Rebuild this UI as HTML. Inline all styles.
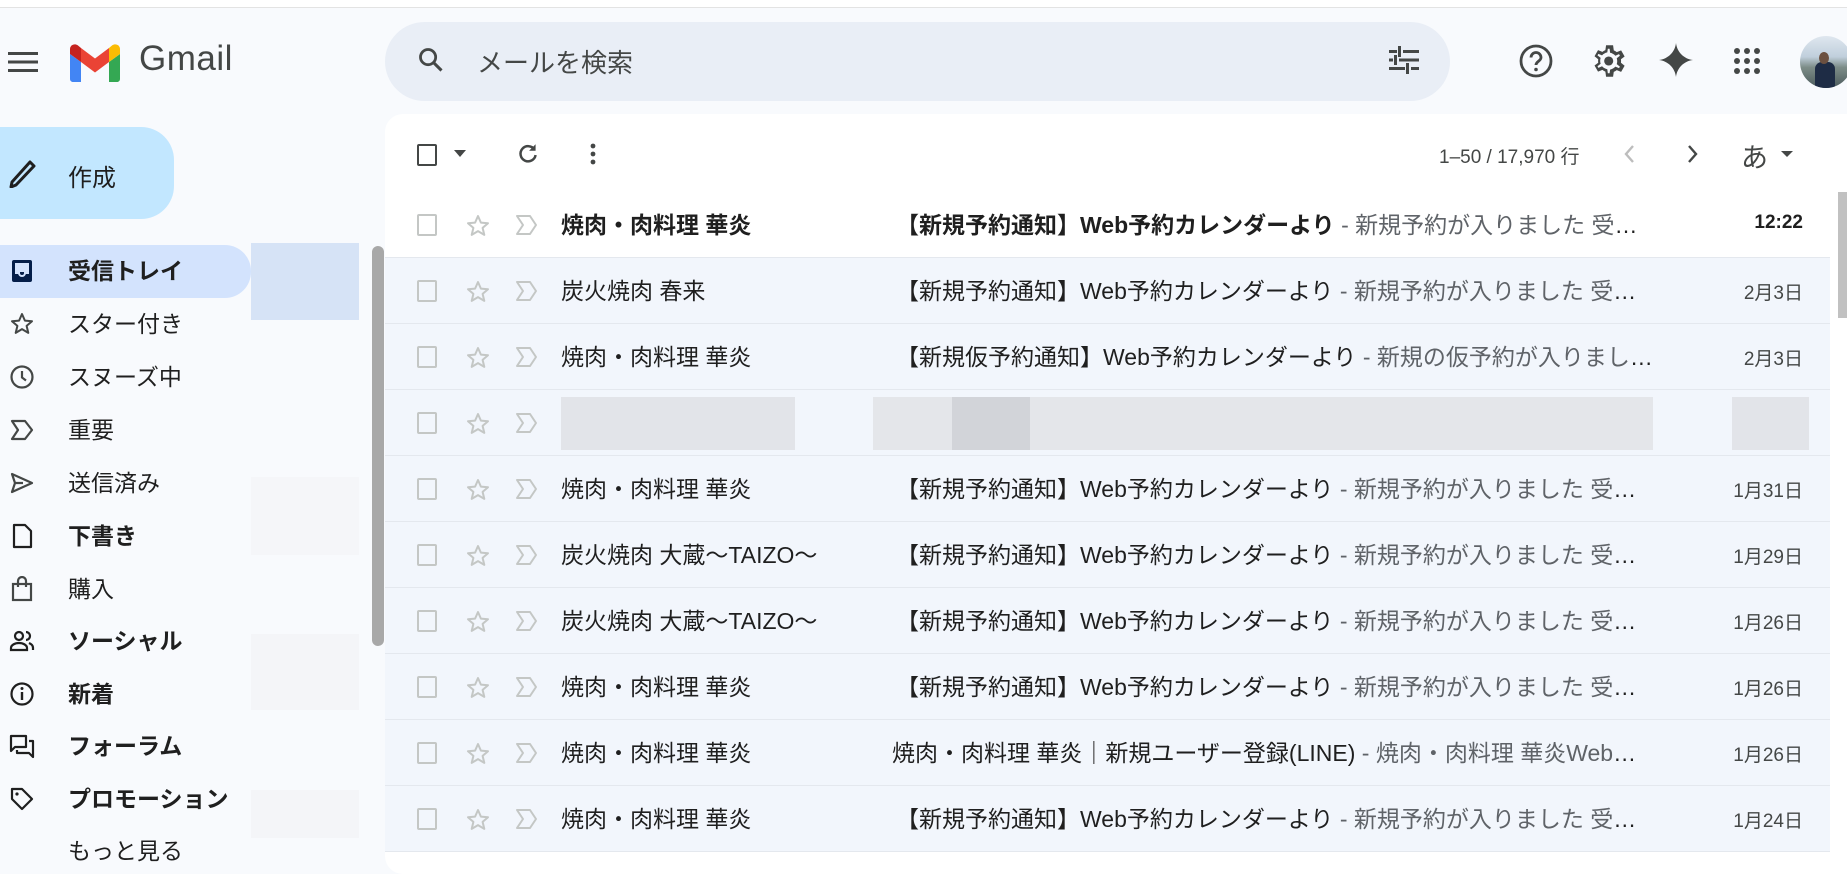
<!DOCTYPE html>
<html><head><meta charset="utf-8"><style>
*{box-sizing:border-box;margin:0;padding:0}
body{width:1847px;height:851px;overflow:hidden;background:#f8fafd;font-family:"Liberation Sans","Noto Sans CJK JP",sans-serif;color:#1f1f1f;position:relative}
.abs{position:absolute}
.topband{left:0;top:0;width:1847px;height:8px;background:#fff;border-bottom:1px solid #e3e3e3}
.search{left:385px;top:22px;width:1065px;height:79px;border-radius:40px;background:#e9eef6}
.ph{left:477px;top:43px;font-size:26px;color:#444746}
.compose{left:0;top:127px;width:174px;height:92px;border-radius:0 33px 33px 0;background:#c2e7ff}
.nav{left:68px;font-size:23px;color:#1f1f1f;line-height:26px}
.nav.b{font-weight:bold}
.navi{left:9px;width:26px;height:26px}
.panel{left:385px;top:114px;width:1480px;height:760px;background:#fff;border-radius:18px}
.row{left:385px;width:1445px;height:66px;background:#f2f6fc;border-bottom:1px solid #e4e8ee}
.row.w{background:#fff}
.cb{position:absolute;left:32px;top:22px;width:20px;height:22px;border:2px solid #c4c7c5;border-radius:2px}
.row svg.st{position:absolute;left:80px;top:21px}
.row svg.im{position:absolute;left:130px;top:22px}
.snd{position:absolute;left:176px;top:18px;font-size:23px;line-height:30px;white-space:nowrap}
.sub{position:absolute;left:511px;top:18px;width:760px;font-size:23px;line-height:30px;white-space:nowrap;overflow:hidden;text-overflow:ellipsis}
.sub span{color:#5f6368}
.dt{position:absolute;right:27px;top:20px;font-size:19px;color:#444746}
.b{font-weight:bold}
.blur{position:absolute;top:7px;height:53px;background:#e2e4e9}
</style></head><body>
<div class="abs topband"></div>
<svg class="abs" style="left:8px;top:50px" width="30" height="24" viewBox="0 0 30 24"><rect x="0" y="2" width="30" height="3" fill="#444746"/><rect x="0" y="10.5" width="30" height="3" fill="#444746"/><rect x="0" y="19" width="30" height="3" fill="#444746"/></svg>
<svg class="abs" style="left:70px;top:44px" width="50" height="38" viewBox="0 0 50 38">
<path d="M3 38h8V18L0 10v25c0 1.7 1.3 3 3 3z" fill="#4285f4"/>
<path d="M39 38h8c1.7 0 3-1.3 3-3V10l-11 8z" fill="#34a853"/>
<path d="M39 4v14l11-8V5c0-4-4.5-6-7.7-3.7z" fill="#fbbc04"/>
<path d="M11 18V4l14 10.5L39 4v14L25 28.5z" fill="#ea4335"/>
<path d="M0 5v5l11 8V4L7.7 1.3C4.5-1 0 1 0 5z" fill="#c5221f"/>
</svg>
<div class="abs" style="left:139px;top:39px;font-size:35px;color:#444746;letter-spacing:0.5px">Gmail</div>
<div class="abs search"></div>
<svg class="abs" style="left:417px;top:46px" width="28" height="28" viewBox="0 0 24 24"><circle cx="9.5" cy="9.5" r="6.5" stroke="#444746" stroke-width="2.4" fill="none"/><path d="M14.5 14.5L21 21" stroke="#444746" stroke-width="2.6"/></svg>
<div class="abs ph">メールを検索</div>
<svg class="abs" style="left:1389px;top:46px" width="30" height="28" viewBox="0 0 30 28"><g fill="#444746"><rect x="0" y="4" width="8" height="3"/><rect x="14" y="4" width="16" height="3"/><rect x="9" y="0" width="3" height="11"/><rect x="0" y="12.5" width="4" height="3"/><rect x="10" y="12.5" width="20" height="3"/><rect x="5" y="9" width="3" height="10"/><rect x="0" y="21" width="16" height="3"/><rect x="22" y="21" width="8" height="3"/><rect x="17" y="17" width="3" height="11"/></g></svg>
<svg class="abs" style="left:1519px;top:44px" width="34" height="34" viewBox="0 0 34 34"><circle cx="17" cy="17" r="15" stroke="#444746" stroke-width="2.8" fill="none"/><path d="M12 13.5a5 5 0 0 1 10 0c0 3.5-5 4-5 7.5" stroke="#444746" stroke-width="2.8" fill="none"/><circle cx="17" cy="25.5" r="1.8" fill="#444746"/></svg>
<svg class="abs" style="left:1587px;top:40px" width="42" height="42" viewBox="0 0 24 24"><path fill="#444746" d="M19.4 13a7.5 7.5 0 0 0 0-2l2.1-1.6-2-3.5-2.5 1a7.6 7.6 0 0 0-1.7-1L14.9 3h-4l-.4 2.8a7.6 7.6 0 0 0-1.7 1l-2.5-1-2 3.5L6.4 11a7.5 7.5 0 0 0 0 2l-2.1 1.6 2 3.5 2.5-1a7.6 7.6 0 0 0 1.7 1l.4 2.9h4l.4-2.8a7.6 7.6 0 0 0 1.7-1l2.5 1 2-3.5zM12.9 19h-1l-.3-2.3a5.6 5.6 0 0 1-3-1.7l-2.1.9-.5-.9 1.8-1.4a5.6 5.6 0 0 1 0-3.4L6 8.8l.5-.9 2.1.9a5.6 5.6 0 0 1 3-1.7L11.9 5h1l.3 2.3a5.6 5.6 0 0 1 3 1.7l2.1-.9.5.9-1.8 1.4a5.6 5.6 0 0 1 0 3.4l1.8 1.4-.5.9-2.1-.9a5.6 5.6 0 0 1-3 1.7z"/><circle cx="12.4" cy="12" r="2.6" fill="#444746"/></svg>
<svg class="abs" style="left:1659px;top:43px" width="34" height="34" viewBox="0 0 34 34"><path d="M17 0C18 9 25 16 34 17 25 18 18 25 17 34 16 25 9 18 0 17 9 16 16 9 17 0z" fill="#444746"/></svg>
<svg class="abs" style="left:1733px;top:47px" width="28" height="28" viewBox="0 0 28 28"><g fill="#444746"><circle cx="4" cy="4" r="3"/><circle cx="14" cy="4" r="3"/><circle cx="24" cy="4" r="3"/><circle cx="4" cy="14" r="3"/><circle cx="14" cy="14" r="3"/><circle cx="24" cy="14" r="3"/><circle cx="4" cy="24" r="3"/><circle cx="14" cy="24" r="3"/><circle cx="24" cy="24" r="3"/></g></svg>
<div class="abs" style="left:1800px;top:36px;width:52px;height:52px;border-radius:50%;overflow:hidden;background:linear-gradient(#dfe7ef 0%,#c0cfdc 40%,#7d8d88 60%,#4b5a5c 100%)"><div style="position:absolute;left:15px;top:26px;width:20px;height:28px;background:#1e2c45;border-radius:7px 7px 0 0"></div><div style="position:absolute;left:19px;top:16px;width:10px;height:12px;background:#6b5040;border-radius:50%"></div></div>
<div class="abs compose"></div>
<svg class="abs" style="left:8px;top:158px" width="28" height="30" viewBox="0 0 28 30"><path d="M4 24L22 4l4 4-18 19-5 2z" stroke="#1f1f1f" stroke-width="3" fill="none" stroke-linejoin="round"/></svg>
<div class="abs" style="left:68px;top:158px;font-size:24px">作成</div>
<div class="abs" style="left:0;top:245px;width:251px;height:53px;background:#d3e3fd;border-radius:0 26px 26px 0"></div>
<div class="abs" style="left:251px;top:243px;width:108px;height:77px;background:#d6e3f6"></div>
<div class="abs" style="left:251px;top:477px;width:108px;height:78px;background:#f5f6f9"></div>
<div class="abs" style="left:251px;top:634px;width:108px;height:76px;background:#f4f5f8"></div>
<div class="abs" style="left:251px;top:790px;width:108px;height:48px;background:#f4f5f8"></div>
<svg class="abs navi" style="top:258px" viewBox="0 0 26 26"><rect x="3" y="2" width="20" height="22" rx="2" fill="#041e49"/><path d="M6 15h4a3 3 0 0 0 6 0h4" stroke="#d3e3fd" stroke-width="2" fill="none"/><rect x="6" y="5" width="14" height="9" fill="#d3e3fd"/></svg>
<div class="abs nav b" style="top:258px">受信トレイ</div>
<svg class="abs navi" style="top:311px" viewBox="0 0 26 26"><path d="M13 3l2.9 6.6 7.1.6-5.4 4.7 1.7 7-6.3-3.8-6.3 3.8 1.7-7L3 10.2l7.1-.6z" stroke="#444746" stroke-width="2" fill="none" stroke-linejoin="round"/></svg>
<div class="abs nav" style="top:311px">スター付き</div>
<svg class="abs navi" style="top:364px" viewBox="0 0 26 26"><circle cx="13" cy="13" r="10.5" stroke="#444746" stroke-width="2.2" fill="none"/><path d="M13 7v6.5l4 3" stroke="#444746" stroke-width="2.2" fill="none"/></svg>
<div class="abs nav" style="top:364px">スヌーズ中</div>
<svg class="abs navi" style="top:417px" viewBox="0 0 26 26"><path d="M3 4h13l7 9-7 9H3l6-9z" stroke="#444746" stroke-width="2.2" fill="none" stroke-linejoin="round"/></svg>
<div class="abs nav" style="top:417px">重要</div>
<svg class="abs navi" style="top:470px" viewBox="0 0 26 26"><path d="M3 4l20 9-20 9 3-9zM6 13h8" stroke="#444746" stroke-width="2.2" fill="none" stroke-linejoin="round"/></svg>
<div class="abs nav" style="top:470px">送信済み</div>
<svg class="abs navi" style="top:523px" viewBox="0 0 26 26"><path d="M5 2h11l6 6v16H5z" stroke="#1f1f1f" stroke-width="2.2" fill="none" stroke-linejoin="round"/></svg>
<div class="abs nav b" style="top:523px">下書き</div>
<svg class="abs navi" style="top:576px" viewBox="0 0 26 26"><rect x="4" y="8" width="18" height="16" stroke="#444746" stroke-width="2.2" fill="none"/><path d="M9 11V5a4 4 0 0 1 8 0v6" stroke="#444746" stroke-width="2.2" fill="none"/></svg>
<div class="abs nav" style="top:576px">購入</div>
<svg class="abs navi" style="top:628px" viewBox="0 0 26 26"><circle cx="10" cy="8" r="4" stroke="#1f1f1f" stroke-width="2.2" fill="none"/><path d="M2 22v-2c0-3 4-5 8-5s8 2 8 5v2zM17 4a4 4 0 0 1 0 8M20 15c2 1 4 2 4 5v2" stroke="#1f1f1f" stroke-width="2.2" fill="none"/></svg>
<div class="abs nav b" style="top:628px">ソーシャル</div>
<svg class="abs navi" style="top:681px" viewBox="0 0 26 26"><circle cx="13" cy="13" r="10.5" stroke="#1f1f1f" stroke-width="2.2" fill="none"/><path d="M13 11v8" stroke="#1f1f1f" stroke-width="2.4"/><circle cx="13" cy="7.5" r="1.5" fill="#1f1f1f"/></svg>
<div class="abs nav b" style="top:681px">新着</div>
<svg class="abs navi" style="top:733px" viewBox="0 0 26 26"><path d="M2 3h15v11H6l-4 4zM20 8h4v16l-4-4H8v-3" stroke="#1f1f1f" stroke-width="2.2" fill="none" stroke-linejoin="round"/></svg>
<div class="abs nav b" style="top:733px">フォーラム</div>
<svg class="abs navi" style="top:786px" viewBox="0 0 26 26"><path d="M3 3h10l10 10-10 10L3 13z" stroke="#1f1f1f" stroke-width="2.2" fill="none" stroke-linejoin="round"/><circle cx="8" cy="8" r="1.6" fill="#1f1f1f"/></svg>
<div class="abs nav b" style="top:786px">プロモーション</div>
<div class="abs nav" style="top:838px">もっと見る</div>
<div class="abs" style="left:372px;top:246px;width:12px;height:400px;border-radius:6px;background:#a8a8a8"></div>
<div class="abs panel"></div>
<div class="abs" style="left:417px;top:144px;width:20px;height:22px;border:2.5px solid #444746;border-radius:2px"></div>
<svg class="abs" style="left:454px;top:150px" width="12" height="8"><path d="M0 0h12L6 7z" fill="#444746"/></svg>
<svg class="abs" style="left:515px;top:141px" width="26" height="26" viewBox="0 0 24 24"><path d="M18 8a7 7 0 1 0 1 5" stroke="#444746" stroke-width="2.3" fill="none"/><path d="M19 3v6h-6z" fill="#444746"/></svg>
<svg class="abs" style="left:589px;top:142px" width="8" height="24"><circle cx="4" cy="4" r="2.4" fill="#444746"/><circle cx="4" cy="12" r="2.4" fill="#444746"/><circle cx="4" cy="20" r="2.4" fill="#444746"/></svg>
<div class="abs" style="left:1439px;top:142px;font-size:19px;color:#444746">1–50 / 17,970 行</div>
<svg class="abs" style="left:1623px;top:144px" width="12" height="20"><path d="M10 2L3 10l7 8" stroke="#bdbdbd" stroke-width="2.4" fill="none"/></svg>
<svg class="abs" style="left:1687px;top:144px" width="12" height="20"><path d="M2 2l7 8-7 8" stroke="#444746" stroke-width="2.4" fill="none"/></svg>
<div class="abs" style="left:1741px;top:136px;font-size:27px;color:#444746">あ</div>
<svg class="abs" style="left:1781px;top:151px" width="12" height="7"><path d="M0 0h12L6 6z" fill="#444746"/></svg>
<div class="abs" style="left:1838px;top:192px;width:9px;height:126px;background:#c1c1c1"></div>
<div class="abs row w" style="top:192px"><div class="cb"></div><svg class="st" width="26" height="26" viewBox="0 0 26 26"><path d="M13 3l2.9 6.6 7.1.6-5.4 4.7 1.7 7-6.3-3.8-6.3 3.8 1.7-7L3 10.2l7.1-.6z" stroke="#c4c7c5" stroke-width="2" fill="none" stroke-linejoin="round"/></svg><svg class="im" width="24" height="22" viewBox="0 0 24 22"><path d="M2 2h13l6 9-6 9H2l6-9z" stroke="#c4c7c5" stroke-width="2" fill="none" stroke-linejoin="round"/></svg><div class="snd b">焼肉・肉料理 華炎</div><div class="sub"><b>【新規予約通知】Web予約カレンダーより</b> <span>- 新規予約が入りました 受付日時：2024年</span></div><div class="dt b" style="color:#1f1f1f">12:22</div></div>
<div class="abs row" style="top:258px"><div class="cb"></div><svg class="st" width="26" height="26" viewBox="0 0 26 26"><path d="M13 3l2.9 6.6 7.1.6-5.4 4.7 1.7 7-6.3-3.8-6.3 3.8 1.7-7L3 10.2l7.1-.6z" stroke="#c4c7c5" stroke-width="2" fill="none" stroke-linejoin="round"/></svg><svg class="im" width="24" height="22" viewBox="0 0 24 22"><path d="M2 2h13l6 9-6 9H2l6-9z" stroke="#c4c7c5" stroke-width="2" fill="none" stroke-linejoin="round"/></svg><div class="snd">炭火焼肉 春来</div><div class="sub">【新規予約通知】Web予約カレンダーより <span>- 新規予約が入りました 受付日時：2024年</span></div><div class="dt">2月3日</div></div>
<div class="abs row" style="top:324px"><div class="cb"></div><svg class="st" width="26" height="26" viewBox="0 0 26 26"><path d="M13 3l2.9 6.6 7.1.6-5.4 4.7 1.7 7-6.3-3.8-6.3 3.8 1.7-7L3 10.2l7.1-.6z" stroke="#c4c7c5" stroke-width="2" fill="none" stroke-linejoin="round"/></svg><svg class="im" width="24" height="22" viewBox="0 0 24 22"><path d="M2 2h13l6 9-6 9H2l6-9z" stroke="#c4c7c5" stroke-width="2" fill="none" stroke-linejoin="round"/></svg><div class="snd">焼肉・肉料理 華炎</div><div class="sub">【新規仮予約通知】Web予約カレンダーより <span>- 新規の仮予約が入りました 受付日時</span></div><div class="dt">2月3日</div></div>
<div class="abs row" style="top:390px"><div class="cb"></div><svg class="st" width="26" height="26" viewBox="0 0 26 26"><path d="M13 3l2.9 6.6 7.1.6-5.4 4.7 1.7 7-6.3-3.8-6.3 3.8 1.7-7L3 10.2l7.1-.6z" stroke="#c4c7c5" stroke-width="2" fill="none" stroke-linejoin="round"/></svg><svg class="im" width="24" height="22" viewBox="0 0 24 22"><path d="M2 2h13l6 9-6 9H2l6-9z" stroke="#c4c7c5" stroke-width="2" fill="none" stroke-linejoin="round"/></svg>
<div class="blur" style="left:176px;width:234px"></div><div class="blur" style="left:488px;width:780px;background:#e4e6ea"></div><div class="blur" style="left:567px;width:78px;background:#d2d4d9"></div><div class="blur" style="left:1347px;width:77px"></div></div>
<div class="abs row" style="top:456px"><div class="cb"></div><svg class="st" width="26" height="26" viewBox="0 0 26 26"><path d="M13 3l2.9 6.6 7.1.6-5.4 4.7 1.7 7-6.3-3.8-6.3 3.8 1.7-7L3 10.2l7.1-.6z" stroke="#c4c7c5" stroke-width="2" fill="none" stroke-linejoin="round"/></svg><svg class="im" width="24" height="22" viewBox="0 0 24 22"><path d="M2 2h13l6 9-6 9H2l6-9z" stroke="#c4c7c5" stroke-width="2" fill="none" stroke-linejoin="round"/></svg><div class="snd">焼肉・肉料理 華炎</div><div class="sub">【新規予約通知】Web予約カレンダーより <span>- 新規予約が入りました 受付日時：2024年</span></div><div class="dt">1月31日</div></div>
<div class="abs row" style="top:522px"><div class="cb"></div><svg class="st" width="26" height="26" viewBox="0 0 26 26"><path d="M13 3l2.9 6.6 7.1.6-5.4 4.7 1.7 7-6.3-3.8-6.3 3.8 1.7-7L3 10.2l7.1-.6z" stroke="#c4c7c5" stroke-width="2" fill="none" stroke-linejoin="round"/></svg><svg class="im" width="24" height="22" viewBox="0 0 24 22"><path d="M2 2h13l6 9-6 9H2l6-9z" stroke="#c4c7c5" stroke-width="2" fill="none" stroke-linejoin="round"/></svg><div class="snd">炭火焼肉 大蔵〜TAIZO〜</div><div class="sub">【新規予約通知】Web予約カレンダーより <span>- 新規予約が入りました 受付日時：2024年</span></div><div class="dt">1月29日</div></div>
<div class="abs row" style="top:588px"><div class="cb"></div><svg class="st" width="26" height="26" viewBox="0 0 26 26"><path d="M13 3l2.9 6.6 7.1.6-5.4 4.7 1.7 7-6.3-3.8-6.3 3.8 1.7-7L3 10.2l7.1-.6z" stroke="#c4c7c5" stroke-width="2" fill="none" stroke-linejoin="round"/></svg><svg class="im" width="24" height="22" viewBox="0 0 24 22"><path d="M2 2h13l6 9-6 9H2l6-9z" stroke="#c4c7c5" stroke-width="2" fill="none" stroke-linejoin="round"/></svg><div class="snd">炭火焼肉 大蔵〜TAIZO〜</div><div class="sub">【新規予約通知】Web予約カレンダーより <span>- 新規予約が入りました 受付日時：2024年</span></div><div class="dt">1月26日</div></div>
<div class="abs row" style="top:654px"><div class="cb"></div><svg class="st" width="26" height="26" viewBox="0 0 26 26"><path d="M13 3l2.9 6.6 7.1.6-5.4 4.7 1.7 7-6.3-3.8-6.3 3.8 1.7-7L3 10.2l7.1-.6z" stroke="#c4c7c5" stroke-width="2" fill="none" stroke-linejoin="round"/></svg><svg class="im" width="24" height="22" viewBox="0 0 24 22"><path d="M2 2h13l6 9-6 9H2l6-9z" stroke="#c4c7c5" stroke-width="2" fill="none" stroke-linejoin="round"/></svg><div class="snd">焼肉・肉料理 華炎</div><div class="sub">【新規予約通知】Web予約カレンダーより <span>- 新規予約が入りました 受付日時：2024年</span></div><div class="dt">1月26日</div></div>
<div class="abs row" style="top:720px"><div class="cb"></div><svg class="st" width="26" height="26" viewBox="0 0 26 26"><path d="M13 3l2.9 6.6 7.1.6-5.4 4.7 1.7 7-6.3-3.8-6.3 3.8 1.7-7L3 10.2l7.1-.6z" stroke="#c4c7c5" stroke-width="2" fill="none" stroke-linejoin="round"/></svg><svg class="im" width="24" height="22" viewBox="0 0 24 22"><path d="M2 2h13l6 9-6 9H2l6-9z" stroke="#c4c7c5" stroke-width="2" fill="none" stroke-linejoin="round"/></svg><div class="snd">焼肉・肉料理 華炎</div><div class="sub" style="left:507px">焼肉・肉料理 華炎｜新規ユーザー登録(LINE) <span>- 焼肉・肉料理 華炎Webからの通知</span></div><div class="dt">1月26日</div></div>
<div class="abs row" style="top:786px"><div class="cb"></div><svg class="st" width="26" height="26" viewBox="0 0 26 26"><path d="M13 3l2.9 6.6 7.1.6-5.4 4.7 1.7 7-6.3-3.8-6.3 3.8 1.7-7L3 10.2l7.1-.6z" stroke="#c4c7c5" stroke-width="2" fill="none" stroke-linejoin="round"/></svg><svg class="im" width="24" height="22" viewBox="0 0 24 22"><path d="M2 2h13l6 9-6 9H2l6-9z" stroke="#c4c7c5" stroke-width="2" fill="none" stroke-linejoin="round"/></svg><div class="snd">焼肉・肉料理 華炎</div><div class="sub">【新規予約通知】Web予約カレンダーより <span>- 新規予約が入りました 受付日時：2024年</span></div><div class="dt">1月24日</div></div>
</body></html>
